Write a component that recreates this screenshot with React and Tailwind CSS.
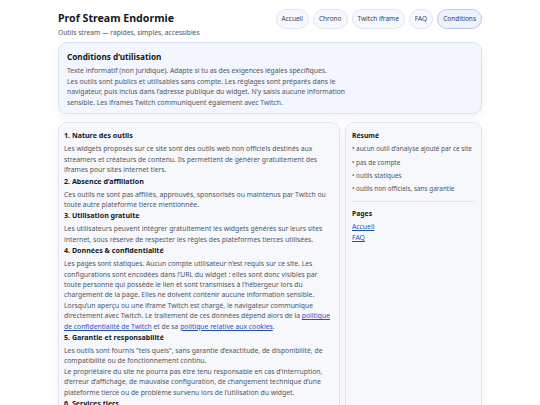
import React from "react";

const font = { fontFamily: '"Noto Sans", "DejaVu Sans", sans-serif' };

function H({ children }) {
  return <h3 className="text-[7.1px] leading-[11px] font-bold text-[#111827] mb-[3px]">{children}</h3>;
}
function P({ children }) {
  return <p className="text-[6.8px] leading-[10.4px] text-[#4b5563]">{children}</p>;
}
const A = ({ children }) => (
  <a className="text-[#1d4ed8] underline decoration-[0.5px] underline-offset-[1px]">{children}</a>
);

export default function App() {
  const nav = ["Accueil", "Chrono", "Twitch iframe", "FAQ", "Conditions"];
  return (
    <div className="w-[540px] h-[405px] overflow-hidden bg-white" style={font}>
      <div className="w-[424px] mx-auto pt-[8px]">
        <header className="flex items-start justify-between">
          <div className="pt-[3px]">
            <h1 className="text-[10.6px] leading-[14px] font-bold text-[#111827]">Prof Stream Endormie</h1>
            <p className="text-[6.7px] leading-[10px] text-[#4b5563] mt-[3px]">Outils stream — rapides, simples, accessibles</p>
          </div>
          <nav className="flex gap-[4px] pt-[1px]">
            {nav.map((n) => (
              <a
                key={n}
                className={
                  "h-[20px] flex items-center px-[5px] rounded-full border text-[6.5px] text-[#374151] " +
                  (n === "Conditions"
                    ? "bg-[#eef2ff] border-[#b9c7ee]"
                    : "bg-[#f6f8ff] border-[#dfe5f5]")
                }
              >
                {n}
              </a>
            ))}
          </nav>
        </header>

        <section className="mt-[4px] rounded-[9px] border border-[#d9e1f7] bg-[#f3f6ff] px-[8px] pt-[8px] pb-[5px] shadow-[0_4px_12px_rgba(0,0,0,0.05)]">
          <h2 className="text-[8.2px] leading-[12px] font-bold text-[#111827] mb-[3px]">Conditions d’utilisation</h2>
          <p className="max-w-[285px] text-[6.8px] leading-[10.6px] text-[#4b5563]">
            Texte informatif (non juridique). Adapte si tu as des exigences légales spécifiques.
            <br />
            Les outils sont publics et utilisables sans compte. Les réglages sont préparés dans le navigateur, puis inclus dans l’adresse publique du widget. N’y saisis aucune information sensible. Les iframes Twitch communiquent également avec Twitch.
          </p>
        </section>

        <div className="mt-[8px] flex gap-[5px] items-start">
          <main className="w-[282px] shrink-0 rounded-[9px] border border-[#dfe5f5] bg-[#f7f8fc] px-[5px] pt-[7px] pb-[10px] shadow-[0_4px_12px_rgba(0,0,0,0.05)]">
            <H>1. Nature des outils</H>
            <P>Les widgets proposés sur ce site sont des outils web non officiels destinés aux streamers et créateurs de contenu. Ils permettent de générer gratuitement des iframes pour sites internet tiers.</P>
            <H>2. Absence d’affiliation</H>
            <P>Ces outils ne sont pas affiliés, approuvés, sponsorisés ou maintenus par Twitch ou toute autre plateforme tierce mentionnée.</P>
            <H>3. Utilisation gratuite</H>
            <P>Les utilisateurs peuvent intégrer gratuitement les widgets générés sur leurs sites internet, sous réserve de respecter les règles des plateformes tierces utilisées.</P>
            <H>4. Données &amp; confidentialité</H>
            <P>
              Les pages sont statiques. Aucun compte utilisateur n’est requis sur ce site. Les configurations sont encodées dans l’URL du widget : elles sont donc visibles par toute personne qui possède le lien et sont transmises à l’hébergeur lors du chargement de la page. Elles ne doivent contenir aucune information sensible. Lorsqu’un aperçu ou une iframe Twitch est chargé, le navigateur communique directement avec Twitch. Le traitement de ces données dépend alors de la <A>politique de confidentialité de Twitch</A> et de sa <A>politique relative aux cookies</A>.
            </P>
            <H>5. Garantie et responsabilité</H>
            <P>Les outils sont fournis "tels quels", sans garantie d’exactitude, de disponibilité, de compatibilité ou de fonctionnement continu.</P>
            <P>Le propriétaire du site ne pourra pas être tenu responsable en cas d’interruption, d’erreur d’affichage, de mauvaise configuration, de changement technique d’une plateforme tierce ou de problème survenu lors de l’utilisation du widget.</P>
            <H>6. Services tiers</H>
            <P>Les services tiers intégrés restent soumis à leurs propres conditions.</P>
          </main>

          <aside className="flex-1 rounded-[9px] border border-[#dfe5f5] bg-[#f7f8fc] px-[6px] pt-[8px] pb-[12px] h-[300px] shadow-[0_4px_12px_rgba(0,0,0,0.05)]">
            <h3 className="text-[6.8px] leading-[10px] font-bold text-[#111827] mb-[3px]">Résumé</h3>
            <ul className="text-[6.4px] leading-[10px] text-[#4b5563] flex flex-col gap-[3.3px]">
              <li>• aucun outil d’analyse ajouté par ce site</li>
              <li>• pas de compte</li>
              <li>• outils statiques</li>
              <li>• outils non officiels, sans garantie</li>
            </ul>
            <div className="border-t border-[#e3e7f0] mt-[7px] pt-[7px]">
              <h3 className="text-[6.8px] leading-[10px] font-bold text-[#111827] mb-[3px]">Pages</h3>
              <div className="flex flex-col text-[6.8px] leading-[10.5px]">
                <A>Accueil</A>
                <A>FAQ</A>
              </div>
            </div>
          </aside>
        </div>
      </div>
    </div>
  );
}
